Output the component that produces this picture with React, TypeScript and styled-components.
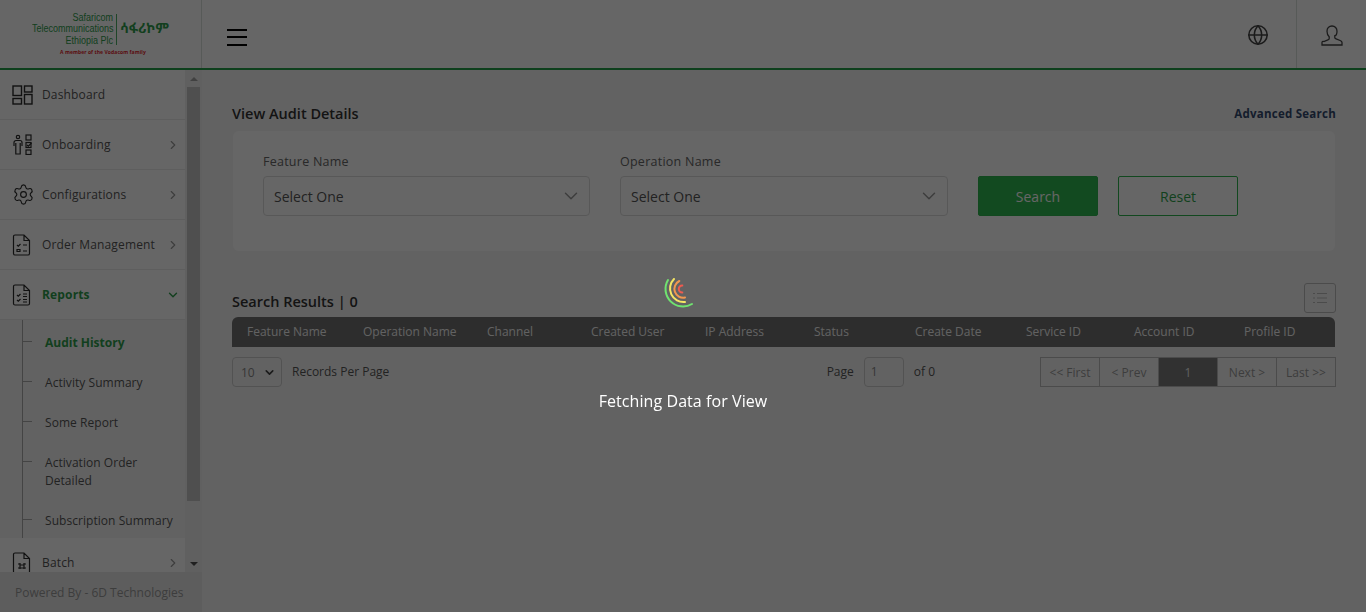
import styled, { createGlobalStyle } from 'styled-components';
import { ChevronRight, ChevronDown, Globe, Settings } from 'lucide-react';
import type { ReactNode } from 'react';

const GlobalStyle = createGlobalStyle`
  html, body, #root {
    margin: 0;
    height: 100%;
    overflow: hidden;
  }
  body {
    font-family: "Open Sans", "Noto Sans", sans-serif;
    background: #fff;
    color: #555;
  }
  * { box-sizing: border-box; }
`;

const Page = styled.div`
  height: 612px;
  display: flex;
  flex-direction: column;
`;

const Header = styled.header`
  height: 70px;
  flex: none;
  display: flex;
  align-items: stretch;
  background: #fff;
  border-bottom: 2px solid #23a049;
`;

const LogoCell = styled.div`
  width: 202px;
  flex: none;
  border-right: 1px solid #d9e2dc;
  padding: 13px 0 0 33px;
`;

const LogoTop = styled.div`
  display: flex;
  align-items: center;
  height: 32px;
`;

const LogoName = styled.div`
  width: 90px;
  margin-left: -10px;
  transform: scaleX(0.9);
  transform-origin: right center;
  text-align: right;
  font-family: "Liberation Sans", sans-serif;
  font-size: 10px;
  line-height: 11.5px;
  color: #2f9e4d;
  white-space: nowrap;
`;

const LogoRule = styled.div`
  width: 1px;
  height: 31px;
  background: #4fae68;
  margin: 0 3px;
`;

const LogoAmharic = styled.div`
  font-family: "Noto Sans Ethiopic", "DejaVu Sans", sans-serif;
  font-size: 13.600px;
  font-weight: 700;
  margin-top: -4px;
  color: #2f9e4d;
  white-space: nowrap;
`;

const LogoTag = styled.div`
  margin: 4px 0 0 27px;
  font-size: 5px;
  line-height: 7px;
  font-weight: 700;
  letter-spacing: 0.08px;
  color: #e2252b;
  white-space: nowrap;
`;

const MenuButton = styled.button`
  border: 0;
  background: none;
  padding: 6px 0 0;
  margin-left: 25px;
  width: 20px;
  display: flex;
  flex-direction: column;
  justify-content: center;
  gap: 5.500px;
  span {
    display: block;
    height: 2px;
    background: #000;
  }
`;

const HeaderEnd = styled.div`
  margin-left: auto;
  display: flex;
  align-items: stretch;
`;

const HeaderIcon = styled.div<{ $divider?: boolean }>`
  width: ${p => (p.$divider ? '70px' : '76px')};
  display: flex;
  align-items: center;
  justify-content: center;
  color: #444;
  padding-top: 2px;
  border-left: ${p => (p.$divider ? '1px solid #d9e2dc' : '0')};
`;

const Body = styled.div`
  flex: 1;
  min-height: 0;
  display: flex;
`;

const Aside = styled.aside`
  width: 202px;
  flex: none;
  display: flex;
  flex-direction: column;
  background: #fff;
`;

const AsideScroll = styled.div`
  flex: 1;
  min-height: 0;
  display: flex;
`;

const Nav = styled.nav`
  width: 185px;
  flex: none;
  overflow: hidden;
`;

const NavRow = styled.div<{ $active?: boolean }>`
  height: 50px;
  display: flex;
  align-items: center;
  padding-left: 12px;
  border-bottom: 1px solid #ececec;
  color: ${p => (p.$active ? '#2f9e4d' : '#555')};
  svg { flex: none; }
`;

const NavIcon = styled.div`
  width: 30px;
  height: 24px;
  flex: none;
  color: #2b2b2b;
  display: flex;
  align-items: center;
`;

const NavLabel = styled.span<{ $active?: boolean }>`
  flex: 1;
  font-size: 12px;
  letter-spacing: 0.15px;
  font-weight: ${p => (p.$active ? 700 : 400)};
`;

const NavChevron = styled.div<{ $active?: boolean }>`
  width: 20px;
  margin-right: 2px;
  display: flex;
  justify-content: center;
  color: ${p => (p.$active ? '#2f9e4d' : '#999')};
`;

const SubMenu = styled.ul`
  list-style: none;
  margin: 0;
  padding: 0 0 0 22px;
  height: 218px;
  background: #f5f5f5;
  position: relative;
  &::before {
    content: '';
    position: absolute;
    left: 22px;
    top: 0;
    bottom: 0;
    width: 1px;
    background: #aaa;
  }
`;

const SubItem = styled.li<{ $active?: boolean; $tall?: boolean }>`
  position: relative;
  padding: 14px 0 0 23px;
  height: ${p => (p.$tall ? '58px' : '40px')};
  font-size: 12px;
  line-height: 18px;
  letter-spacing: ${p => (p.$active ? '0' : '0.05px')};
  font-weight: ${p => (p.$active ? 700 : 400)};
  color: ${p => (p.$active ? '#2f9e4d' : '#555')};
  &::before {
    content: '';
    position: absolute;
    left: 0;
    top: 21px;
    width: 10px;
    height: 1px;
    background: #aaa;
  }
`;

const ScrollTrack = styled.div`
  width: 17px;
  flex: none;
  background: #f1f1f1;
  display: flex;
  flex-direction: column;
  align-items: center;
  padding: 7px 0 6px;
`;

const ScrollThumb = styled.div`
  width: 13px;
  height: 414px;
  margin: 6px 0 auto;
  background: #c6c6c6;
`;

const ScrollArrow = styled.div<{ $down?: boolean }>`
  width: 0;
  height: 0;
  border-left: 4px solid transparent;
  border-right: 4px solid transparent;
  ${p => (p.$down ? 'border-top: 4px solid #505050;' : 'border-bottom: 4px solid #a3a3a3;')}
`;

const AsideFooter = styled.footer`
  height: 40px;
  flex: none;
  padding-left: 15px;
  display: flex;
  align-items: center;
  font-size: 12px;
  color: #999;
  background: #e8e8e8;
`;

const Main = styled.main`
  flex: 1;
  min-width: 0;
  background: #f6f6f6;
  padding: 35px 31px 0 30px;
`;

const TitleRow = styled.div`
  display: flex;
  align-items: center;
  justify-content: space-between;
  height: 18px;
  margin-bottom: 8px;
`;

const Title = styled.h2`
  margin: 0;
  font-size: 14.500px;
  font-weight: 600;
  color: #333;
  line-height: 18px;
`;

const AdvancedLink = styled.a`
  font-size: 11.500px;
  font-weight: 700;
  letter-spacing: 0.25px;
  color: #34496e;
  margin-right: -1px;
  margin-top: -2px;
`;

const SearchCard = styled.section`
  margin-left: 1px;
  height: 120px;
  background: #fff;
  border-radius: 6px;
  padding: 21px 30px 0;
  display: flex;
  align-items: flex-start;
`;

const Field = styled.div<{ $width: number }>`
  width: ${p => p.$width}px;
  margin-right: 30px;
`;

const FieldLabel = styled.label`
  display: block;
  font-size: 12.500px;
  line-height: 18px;
  letter-spacing: 0.25px;
  color: #666;
  padding-top: 1px;
  margin-bottom: 5px;
`;

const SelectBox = styled.div`
  height: 40px;
  border: 1px solid #ddd;
  border-radius: 4px;
  display: flex;
  align-items: center;
  justify-content: space-between;
  padding: 0 7px 0 10px;
  font-size: 14px;
  color: #555;
  background: #fff;
  svg { color: #999; }
`;

const ActionButton = styled.button<{ $outline?: boolean }>`
  width: 120px;
  height: 40px;
  margin-top: 24px;
  margin-right: 20px;
  border-radius: 2px;
  border: 1px solid #2fb34f;
  font-family: inherit;
  font-size: 14px;
  background: ${p => (p.$outline ? '#fff' : '#2fb850')};
  color: ${p => (p.$outline ? '#2fa34c' : '#fff')};
`;

const ResultsRow = styled.div`
  display: flex;
  align-items: center;
  justify-content: space-between;
  height: 30px;
  margin-top: 32px;
  margin-bottom: 4px;
  margin-right: -1px;
`;

const ResultsTitle = styled(Title)`
  padding-top: 8px;
`;

const ListToggle = styled.button`
  width: 32px;
  height: 30px;
  border: 1px solid #bbb;
  border-radius: 3px;
  background: none;
  padding: 0;
  display: flex;
  align-items: center;
  justify-content: center;
  color: #bbb;
`;

const TableHead = styled.div`
  height: 30px;
  background: #707070;
  border-radius: 6px 6px 0 0;
  display: grid;
  grid-template-columns: 116px 124px 104px 114px 109px 101px 111px 108px 110px 1fr;
  align-items: center;
  padding: 0 0 2px 15px;
  font-size: 12px;
  color: #f5f5f5;
`;

const TableFoot = styled.div`
  display: flex;
  align-items: center;
  height: 30px;
  margin-top: 10px;
  margin-right: -1px;
  font-size: 12px;
  color: #555;
`;

const PageSizeBox = styled.div`
  width: 50px;
  height: 30px;
  border: 1px solid #ccc;
  border-radius: 4px;
  display: flex;
  align-items: center;
  justify-content: space-between;
  padding: 0 5px 0 8px;
  margin-right: 10px;
  color: #888;
  svg { color: #444; }
`;

const PageInput = styled.div`
  width: 40px;
  height: 30px;
  margin: 0 10px;
  border: 1px solid #ccc;
  border-radius: 4px;
  display: flex;
  align-items: center;
  padding: 0 0 1px 6px;
  color: #888;
`;

const PageLabel = styled.span<{ $pushed?: boolean }>`
  margin-left: ${p => (p.$pushed ? 'auto' : '0')};
  margin-top: -1px;
`;

const Pager = styled.div`
  display: flex;
  margin-left: 105px;
  border: 1px solid #bbb;
`;

const PagerCell = styled.div<{ $current?: boolean }>`
  width: 59px;
  height: 28px;
  display: flex;
  align-items: center;
  justify-content: center;
  font-size: 12px;
  color: ${p => (p.$current ? '#eee' : '#999')};
  background: ${p => (p.$current ? '#7a7a7a' : 'transparent')};
  border-left: 1px solid #bbb;
  &:first-child { border-left: 0; width: 58px; }
`;

const Overlay = styled.div`
  position: fixed;
  inset: 0;
  background: rgba(0, 0, 0, 0.6);
  display: flex;
  flex-direction: column;
  align-items: center;
  padding-top: 270px;
  color: #fff;
`;

const LoaderText = styled.div`
  margin-top: 80px;
  font-size: 16px;
  line-height: 22px;
  letter-spacing: 0.07px;
`;

const DashboardIcon = () => (
  <svg width="21" height="20" viewBox="0 0 21 20" fill="none" stroke="currentColor" strokeWidth="1.4">
    <rect x="1" y="1" width="8.500" height="9.500" />
    <rect x="12.500" y="1" width="7.500" height="6" />
    <rect x="1" y="13.500" width="8.500" height="5.500" />
    <rect x="12.500" y="9.500" width="7.500" height="9.500" />
  </svg>
);

const OnboardingIcon = () => (
  <svg width="21" height="21" viewBox="0 0 21 21" fill="none" stroke="currentColor" strokeWidth="1.2">
    <circle cx="6" cy="3" r="1.700" />
    <path d="M2 12V8.500a2 2 0 0 1 2-2h4a2 2 0 0 1 2 2V12M3.800 9v11h4.400V9" />
    <rect x="14" y="1" width="5" height="5" />
    <rect x="14" y="8.500" width="5" height="5" />
    <rect x="14" y="16" width="5" height="4.500" />
    <path d="M15 11l1.300 1.200L19.500 9" />
  </svg>
);

const DocIcon = ({ children }: { children: ReactNode }) => (
  <svg width="20" height="22" viewBox="0 0 20 22" fill="none" stroke="currentColor" strokeWidth="1.2">
    <path d="M3 1h9l5.500 5.500V19.500a1.500 1.500 0 0 1-1.500 1.500H3a1.500 1.500 0 0 1-1.500-1.500v-17A1.500 1.500 0 0 1 3 1zM12 1v5.500h5.500" />
    {children}
  </svg>
);

const UserIcon = () => (
  <svg width="22" height="21" viewBox="0 0 22 21" fill="none" stroke="currentColor" strokeWidth="1.300">
    <path d="M11 1c-3 0-5 2.200-5 5.200 0 2.300.8 4.300 2.200 5.500v1.700c0 .8-.5 1.200-1.300 1.500l-4 1.600C1.600 16 1 16.600 1 17.600V20h20v-2.400c0-1-.6-1.600-1.900-2.100l-4-1.600c-.8-.3-1.300-.7-1.300-1.500v-1.700C15.200 10.500 16 8.500 16 6.200 16 3.200 14 1 11 1z" />
  </svg>
);

const ListIcon = () => (
  <svg width="14" height="12" viewBox="0 0 14 12" fill="none" stroke="currentColor" strokeWidth="1.200">
    <path d="M0 1.500h2M4 1.500h10M0 6h2M4 6h10M0 10.500h2M4 10.500h10" />
  </svg>
);

const Spinner = () => (
  <svg width="40" height="40" viewBox="0 0 40 40" fill="none" strokeWidth="2" strokeLinecap="round">
    <path d="M5 10A17.500 17.500 0 0 0 29 34" stroke="#6fe36f" />
    <path d="M11 9A13.500 13.500 0 0 0 22 32" stroke="#f5e663" />
    <path d="M16.300 11A8.800 8.800 0 0 0 22 27.500" stroke="#f2974f" />
    <path d="M19.300 15.500A3.500 3.500 0 0 0 19.300 22.500" stroke="#ef5a4f" />
  </svg>
);

const columns = ['Feature Name', 'Operation Name', 'Channel', 'Created User', 'IP Address', 'Status', 'Create Date', 'Service ID', 'Account ID', 'Profile ID'];

const App = () => {
  return (
    <>
      <GlobalStyle />
      <Page>
        <Header>
          <LogoCell>
            <LogoTop>
              <LogoName>Safaricom<br />Telecommunications<br />Ethiopia Plc</LogoName>
              <LogoRule />
              <LogoAmharic>ሳፋሪኮም</LogoAmharic>
            </LogoTop>
            <LogoTag>A member of the Vodacom family</LogoTag>
          </LogoCell>
          <MenuButton aria-label="menu">
            <span /><span /><span />
          </MenuButton>
          <HeaderEnd>
            <HeaderIcon><Globe size={22} strokeWidth={1.7} /></HeaderIcon>
            <HeaderIcon $divider><UserIcon /></HeaderIcon>
          </HeaderEnd>
        </Header>
        <Body>
          <Aside>
            <AsideScroll>
              <Nav>
                <NavRow>
                  <NavIcon><DashboardIcon /></NavIcon>
                  <NavLabel>Dashboard</NavLabel>
                </NavRow>
                <NavRow>
                  <NavIcon><OnboardingIcon /></NavIcon>
                  <NavLabel>Onboarding</NavLabel>
                  <NavChevron><ChevronRight size={14} /></NavChevron>
                </NavRow>
                <NavRow>
                  <NavIcon><Settings size={23} strokeWidth={1.2} /></NavIcon>
                  <NavLabel>Configurations</NavLabel>
                  <NavChevron><ChevronRight size={14} /></NavChevron>
                </NavRow>
                <NavRow>
                  <NavIcon>
                    <DocIcon>
                      <path d="M5 11l1.300 1.200L8.500 10M11 11h4M5 15.500h3v2H5zM11 17h4" />
                    </DocIcon>
                  </NavIcon>
                  <NavLabel>Order Management</NavLabel>
                  <NavChevron><ChevronRight size={14} /></NavChevron>
                </NavRow>
                <NavRow $active>
                  <NavIcon>
                    <DocIcon>
                      <path d="M5 11l1.300 1.200L8.500 10M5 16l1.300 1.200L8.500 15M11 10h4M11 12.500h4M11 15.500h4M11 18h4" />
                    </DocIcon>
                  </NavIcon>
                  <NavLabel $active>Reports</NavLabel>
                  <NavChevron $active><ChevronDown size={14} strokeWidth={2.4} /></NavChevron>
                </NavRow>
                <SubMenu>
                  <SubItem $active>Audit History</SubItem>
                  <SubItem>Activity Summary</SubItem>
                  <SubItem>Some Report</SubItem>
                  <SubItem $tall>Activation Order Detailed</SubItem>
                  <SubItem>Subscription Summary</SubItem>
                </SubMenu>
                <NavRow>
                  <NavIcon>
                    <DocIcon>
                      <path d="M6 12h2v-1M12 11v1h2M6 16h2v1M12 17v-1h2M8 13h4v3H8z" />
                    </DocIcon>
                  </NavIcon>
                  <NavLabel>Batch</NavLabel>
                  <NavChevron><ChevronRight size={14} /></NavChevron>
                </NavRow>
              </Nav>
              <ScrollTrack>
                <ScrollArrow />
                <ScrollThumb />
                <ScrollArrow $down />
              </ScrollTrack>
            </AsideScroll>
            <AsideFooter>Powered By - 6D Technologies</AsideFooter>
          </Aside>
          <Main>
            <TitleRow>
              <Title>View Audit Details</Title>
              <AdvancedLink>Advanced Search</AdvancedLink>
            </TitleRow>
            <SearchCard>
              <Field $width={327}>
                <FieldLabel>Feature Name</FieldLabel>
                <SelectBox>Select One <ChevronDown size={22} strokeWidth={1.6} /></SelectBox>
              </Field>
              <Field $width={328}>
                <FieldLabel>Operation Name</FieldLabel>
                <SelectBox>Select One <ChevronDown size={22} strokeWidth={1.6} /></SelectBox>
              </Field>
              <ActionButton>Search</ActionButton>
              <ActionButton $outline>Reset</ActionButton>
            </SearchCard>
            <ResultsRow>
              <ResultsTitle>Search Results | 0</ResultsTitle>
              <ListToggle aria-label="columns"><ListIcon /></ListToggle>
            </ResultsRow>
            <TableHead>
              {columns.map(name => <span key={name}>{name}</span>)}
            </TableHead>
            <TableFoot>
              <PageSizeBox>10 <ChevronDown size={13} strokeWidth={3} /></PageSizeBox>
              <PageLabel>Records Per Page</PageLabel>
              <PageLabel $pushed>Page</PageLabel>
              <PageInput>1</PageInput>
              <PageLabel>of 0</PageLabel>
              <Pager>
                <PagerCell>&lt;&lt; First</PagerCell>
                <PagerCell>&lt; Prev</PagerCell>
                <PagerCell $current>1</PagerCell>
                <PagerCell>Next &gt;</PagerCell>
                <PagerCell>Last &gt;&gt;</PagerCell>
              </Pager>
            </TableFoot>
          </Main>
        </Body>
      </Page>
      <Overlay>
        <Spinner />
        <LoaderText>Fetching Data for View</LoaderText>
      </Overlay>
    </>
  );
};

export default App;
